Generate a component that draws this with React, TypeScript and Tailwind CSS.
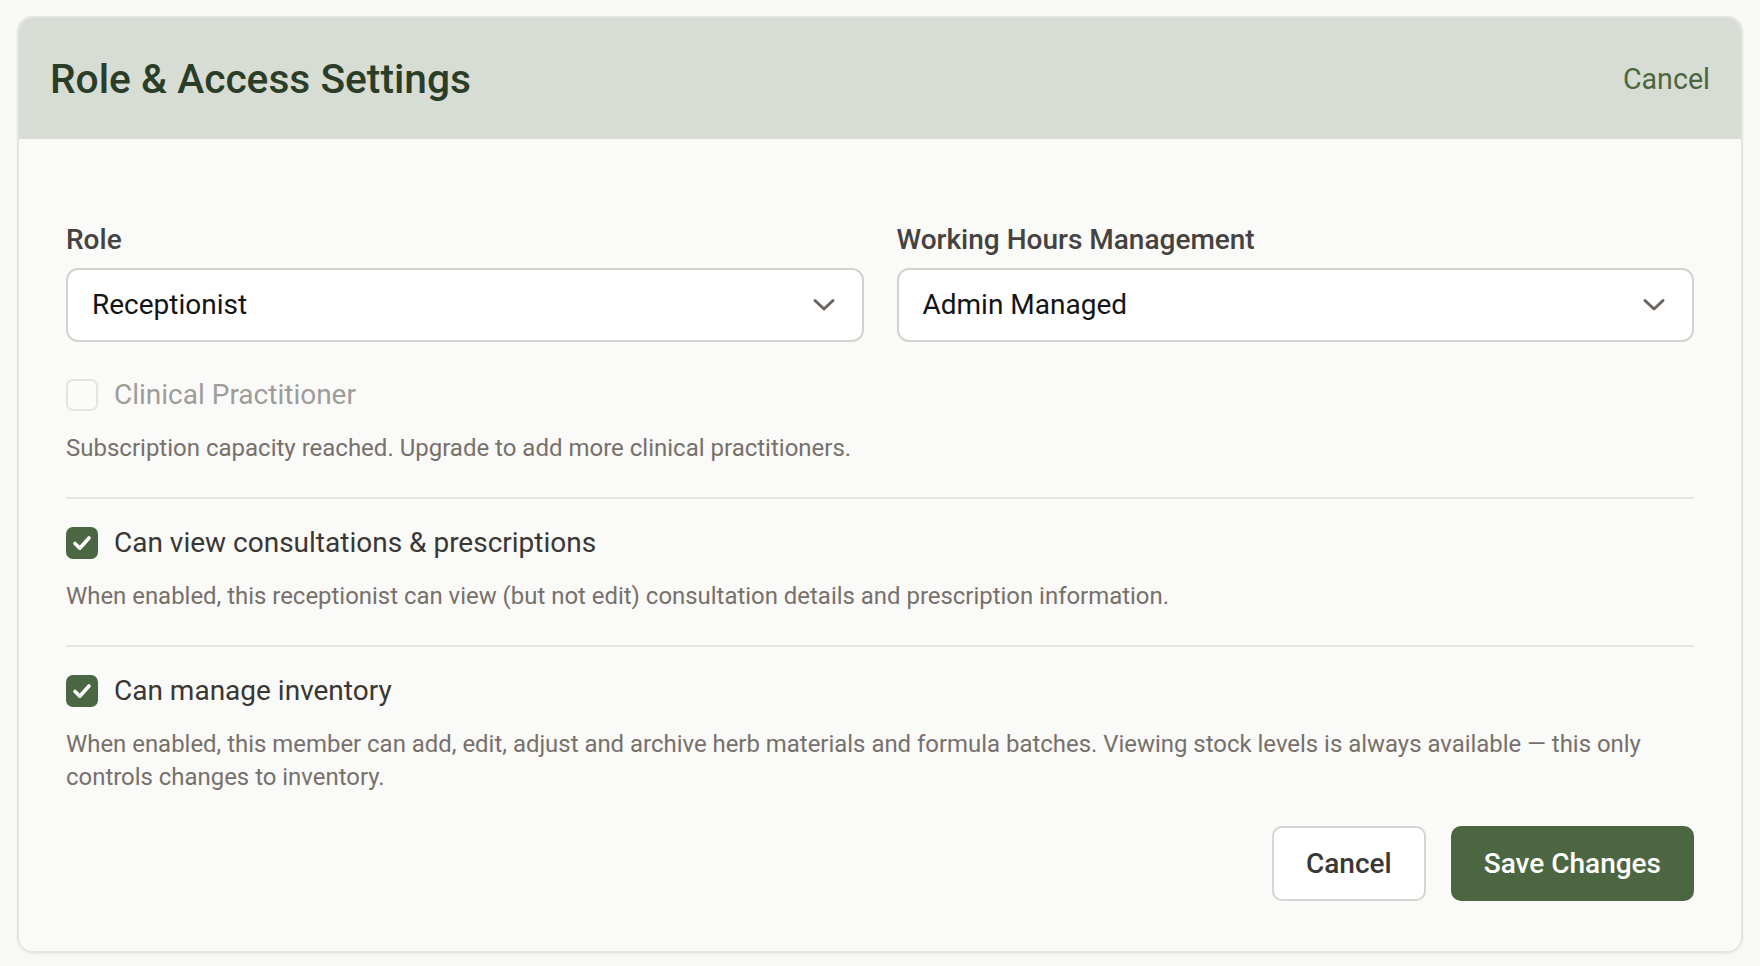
import React from "react";

function Chevron() {
  return (
    <svg width="24" height="14" viewBox="0 0 24 14" fill="none" className="shrink-0">
      <path d="M3 2.5 L12 11 L21 2.5" stroke="#6b6561" strokeWidth="3" strokeLinecap="round" strokeLinejoin="round" />
    </svg>
  );
}

function Checked() {
  return (
    <div className="w-[32px] h-[32px] rounded-[7px] bg-[#4b6642] flex items-center justify-center shrink-0">
      <svg width="32" height="32" viewBox="0 0 32 32" fill="none">
        <path d="M9 16.5 L13.8 21.2 L23 11" stroke="#ffffff" strokeWidth="3.6" strokeLinecap="round" strokeLinejoin="round" />
      </svg>
    </div>
  );
}

function Select({ value }: { value: string }) {
  return (
    <div className="h-[74px] bg-white border-2 border-[#d6d1ce] rounded-[12px] flex items-center justify-between pl-[24px] pr-[26px]">
      <span className="text-[28px] text-[#141414]">{value}</span>
      <Chevron />
    </div>
  );
}

export default function App() {
  return (
    <div className="min-h-[966px] w-[1760px] bg-[#f8f8f6] pt-[16px] pl-[17px] pr-[17px] font-['Roboto','Liberation_Sans',sans-serif]">
      <div className="w-[1726px] bg-[#fafaf8] border-2 border-[#e4e4e0] rounded-[16px] overflow-hidden shadow-[0_1px_3px_rgba(0,0,0,0.06)]">
        <div className="h-[121px] bg-[#d7ddd5] flex items-center justify-between pl-[31px] pr-[31px] pt-[2px]">
          <h1 className="text-[40.7px] font-medium text-[#2b3d26] leading-none">Role &amp; Access Settings</h1>
          <button className="text-[28.6px] text-[#4b6640] leading-none">Cancel</button>
        </div>
        <div className="px-[47px] pt-[83px] pb-[50px] flex flex-col">
          <div className="grid grid-cols-2 gap-[33px]">
            <div className="flex flex-col">
              <label className="text-[28px] leading-[36px] font-medium text-[#46423f] mb-[10px]">Role</label>
              <Select value="Receptionist" />
            </div>
            <div className="flex flex-col">
              <label className="text-[28px] leading-[36px] font-medium text-[#46423f] mb-[10px]">Working Hours Management</label>
              <Select value="Admin Managed" />
            </div>
          </div>

          <div className="mt-[35px] flex items-center gap-[16px] h-[36px]">
            <div className="w-[32px] h-[32px] rounded-[7px] border-2 border-[#e6e4e1] bg-[#fbfbfa] shrink-0" />
            <span className="text-[28px] text-[#a09c99]">Clinical Practitioner</span>
          </div>
          <p className="mt-[19px] text-[24px] leading-[33px] text-[#77706b]">
            Subscription capacity reached. Upgrade to add more clinical practitioners.
          </p>

          <div className="mt-[32px] h-[2px] bg-[#e7e5e2]" />

          <div className="mt-[26px] flex items-center gap-[16px] h-[36px]">
            <Checked />
            <span className="text-[28px] text-[#3a3633]">Can view consultations &amp; prescriptions</span>
          </div>
          <p className="mt-[19px] text-[23.93px] leading-[33px] text-[#77706b]">
            When enabled, this receptionist can view (but not edit) consultation details and prescription information.
          </p>

          <div className="mt-[32px] h-[2px] bg-[#e7e5e2]" />

          <div className="mt-[26px] flex items-center gap-[16px] h-[36px]">
            <Checked />
            <span className="text-[28px] text-[#3a3633]">Can manage inventory</span>
          </div>
          <p className="mt-[19px] text-[23.93px] leading-[33px] text-[#77706b]">
            When enabled, this member can add, edit, adjust and archive herb materials and formula batches. Viewing stock levels is always available — this only controls changes to inventory.
          </p>

          <div className="mt-[32px] flex justify-end gap-[25px]">
            <button className="h-[75px] px-[32px] bg-white border-2 border-[#d9d4d1] rounded-[10px] text-[28px] font-medium text-[#3b3735]">
              Cancel
            </button>
            <button className="h-[75px] px-[33px] bg-[#4c6642] rounded-[10px] text-[28px] font-medium text-white">
              Save Changes
            </button>
          </div>
        </div>
      </div>
    </div>
  );
}
